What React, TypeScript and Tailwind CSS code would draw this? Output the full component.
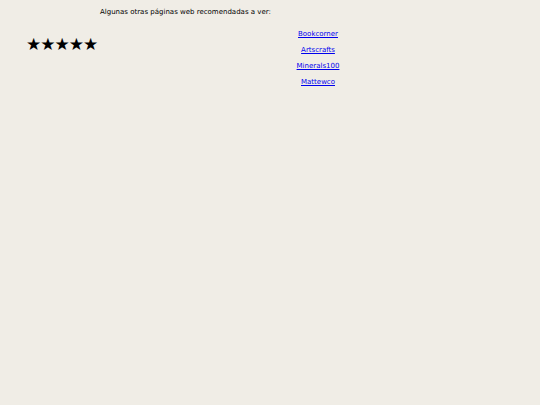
export default function App() {
  const links = ['Bookcorner', 'Artscrafts', 'Minerals100', 'Mattewco'];
  return (
    <div className="min-h-[405px] w-full bg-[#f0ede6] text-[7px] text-black" style={{ fontFamily: '"DejaVu Sans", Verdana, sans-serif' }}>
      <div className="pl-[100px] pt-[8px] leading-[9px]">Algunas otras páginas web recomendadas a ver:</div>
      <div className="flex">
        <div className="w-[220px] pl-[26px] pt-[18px] text-[17px] leading-[18px] tracking-[-1px]">★★★★★</div>
        <div className="flex w-[196px] flex-col items-center pt-[13px]">
          {links.map((l) => (
            <a key={l} href="#" className="mb-[7px] leading-[9px] text-[#0000ee] underline">
              {l}
            </a>
          ))}
        </div>
      </div>
    </div>
  );
}
